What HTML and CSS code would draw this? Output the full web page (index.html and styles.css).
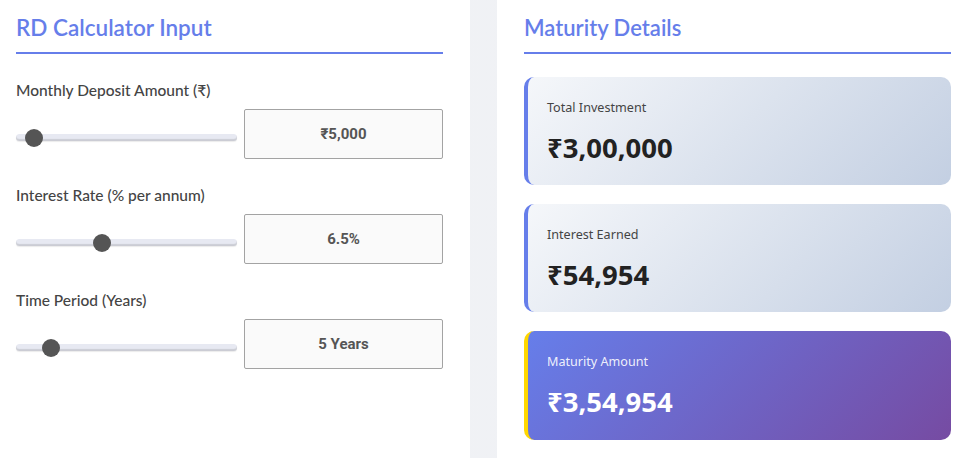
FILE: index.html
```html
<!DOCTYPE html>
<html lang="en">
<head>
<meta charset="utf-8">
<title>RD Calculator</title>
<link rel="stylesheet" href="styles.css">
</head>
<body>
<div class="layout">
  <section class="panel panel-left">
    <h2 class="panel-title">RD Calculator Input</h2>
    <div class="field">
      <label class="field-label">Monthly Deposit Amount (₹)</label>
      <div class="field-row">
        <input class="slider" type="range" min="500" max="100000" step="500" value="5000">
        <div class="value-box">₹5,000</div>
      </div>
    </div>
    <div class="field">
      <label class="field-label">Interest Rate (% per annum)</label>
      <div class="field-row">
        <input class="slider" type="range" min="1" max="15.5" step="0.1" value="6.5">
        <div class="value-box">6.5%</div>
      </div>
    </div>
    <div class="field">
      <label class="field-label">Time Period (Years)</label>
      <div class="field-row">
        <input class="slider" type="range" min="1" max="32" step="1" value="5">
        <div class="value-box">5 Years</div>
      </div>
    </div>
  </section>
  <section class="panel panel-right">
    <h2 class="panel-title">Maturity Details</h2>
    <div class="cards">
      <div class="card">
        <div class="card-label">Total Investment</div>
        <div class="card-value">₹3,00,000</div>
      </div>
      <div class="card">
        <div class="card-label">Interest Earned</div>
        <div class="card-value">₹54,954</div>
      </div>
      <div class="card card-total">
        <div class="card-label">Maturity Amount</div>
        <div class="card-value">₹3,54,954</div>
      </div>
    </div>
  </section>
</div>
</body>
</html>
```
FILE: styles.css
```css
* { box-sizing: border-box; }
html, body { margin: 0; padding: 0; }
body {
  width: 967px;
  height: 458px;
  overflow: hidden;
  background: linear-gradient(to right, #f4f5f8, #eceef2);
  font-family: "Lato", "Noto Sans", sans-serif;
}
.layout {
  display: grid;
  grid-template-columns: 470px 470px;
  column-gap: 27px;
  height: 458px;
}
.panel {
  background: #ffffff;
  height: 100%;
}
.panel-left { padding: 14px 27px 0 16px; }
.panel-right { padding: 14px 16px 0 27px; }
.panel-title {
  margin: 0;
  font-family: "Lato", sans-serif;
  font-weight: 600;
  font-size: 22.5px;
  line-height: 28px;
  color: #667eea;
  padding-bottom: 10px;
  border-bottom: 2px solid #667eea;
}
.panel-right .panel-title { font-size: 22px; }
.panel-left .panel-title { margin-bottom: 26px; }
.panel-right .panel-title { margin-bottom: 23px; }
.field { margin-bottom: 26px; }
.field-label {
  display: block;
  font-family: "Lato", sans-serif;
  font-size: 15.5px;
  font-weight: 500;
  line-height: 20px;
  color: #444;
  margin-bottom: 9px;
}
.field-row {
  display: flex;
  align-items: center;
  gap: 7px;
  height: 50px;
}
.slider {
  -webkit-appearance: none;
  appearance: none;
  width: 221px;
  height: 7px;
  margin: 7px 0 0 0;
  padding: 0;
  border-radius: 4px;
  background: #e7e9f2;
  box-shadow: inset 0 -2px 1px rgba(0,0,0,0.12), 0 1px 1px rgba(0,0,0,0.08);
  outline: none;
}
.slider::-webkit-slider-thumb {
  -webkit-appearance: none;
  appearance: none;
  width: 18px;
  height: 18px;
  border-radius: 50%;
  background: #555555;
  border: none;
  cursor: pointer;
}
.value-box {
  width: 199px;
  height: 50px;
  display: flex;
  align-items: center;
  justify-content: center;
  border: 1px solid #a3a3a3;
  border-radius: 2px;
  background: #fafafa;
  font-family: "Roboto", "Liberation Sans", sans-serif;
  font-weight: 700;
  font-size: 15px;
  color: #555;
}
.cards {
  display: flex;
  flex-direction: column;
  gap: 19px;
}
.card {
  height: 108px;
  padding: 22px 19px 20px;
  border-left: 4px solid #667eea;
  border-radius: 10px;
  background: linear-gradient(135deg, #f5f7fa 0%, #c3cfe2 100%);
  color: #222;
}
.card-label {
  font-family: "Noto Sans", "Open Sans", sans-serif;
  font-size: 12.6px;
  line-height: 18px;
  color: #444;
}
.card-value {
  margin-top: 14px;
  font-family: "Noto Sans", "Open Sans", sans-serif;
  font-weight: 700;
  font-size: 27.5px;
  line-height: 34px;
  color: #222;
}
.card-total {
  height: 109px;
  border-left-color: #ffd700;
  background: linear-gradient(135deg, #667eea 0%, #764ba2 100%);
}
.card-total .card-label { color: rgba(255,255,255,0.9); }
.card-total .card-value { color: #ffffff; }
```
